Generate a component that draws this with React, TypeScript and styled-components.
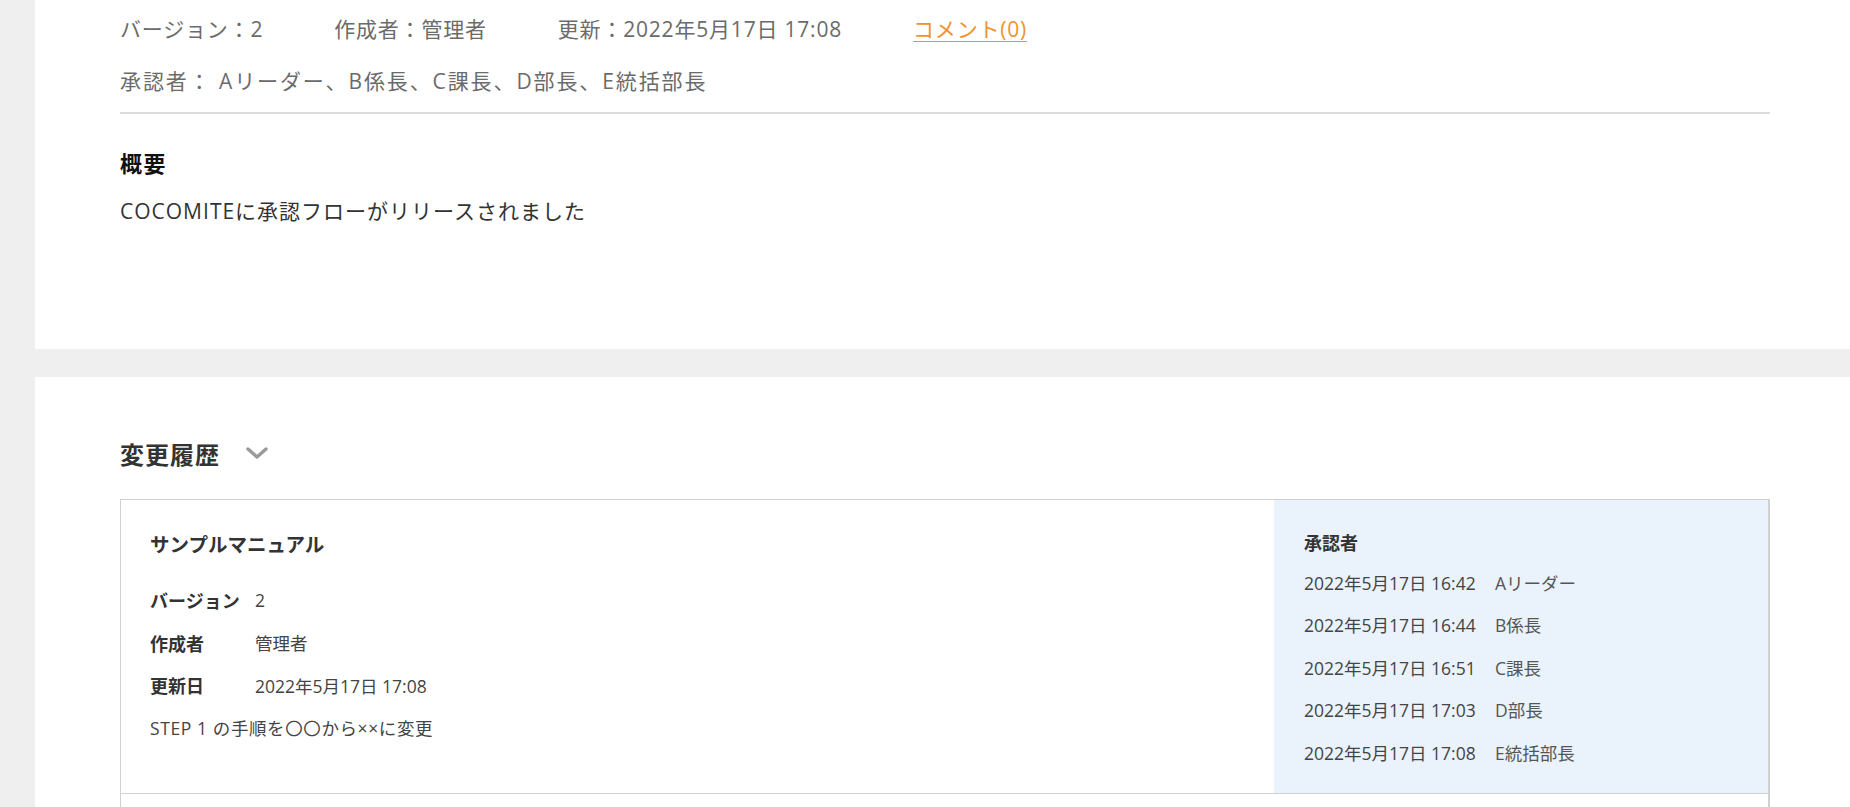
import React from "react";
import styled, { createGlobalStyle } from "styled-components";

const GlobalStyle = createGlobalStyle`
  html, body {
    margin: 0;
    padding: 0;
    background: #efefef;
    font-family: "Open Sans", "Noto Sans CJK JP", "Noto Sans", sans-serif;
    color: #333;
  }
  * { box-sizing: border-box; }
`;

const Page = styled.div`
  display: flex;
  flex-direction: column;
  gap: 28px;
  padding-left: 35px;
`;

const Card = styled.section<{ $top?: number; $bottom?: number }>`
  background: #fff;
  padding: ${(p) => p.$top ?? 0}px 80px ${(p) => p.$bottom ?? 0}px 85px;
`;

const MetaRow = styled.div`
  display: flex;
  align-items: center;
  gap: 71px;
  height: 32px;
  font-size: 21px;
  letter-spacing: 0.8px;
  color: #6b6b6b;
`;

const MetaItem = styled.span`
  flex: none;
  white-space: nowrap;
`;

const CommentLink = styled.a`
  color: #f0922e;
  text-decoration: underline;
  text-underline-offset: 4px;
  text-decoration-thickness: 1px;
  cursor: pointer;
`;

const ApproverLine = styled.div`
  margin-top: 20px;
  height: 32px;
  display: flex;
  align-items: center;
  font-size: 21px;
  letter-spacing: 1.9px;
  color: #6b6b6b;
  white-space: nowrap;
`;

const Divider = styled.hr`
  border: none;
  border-top: 2px solid #dcdcdc;
  margin: 16px 0 0;
`;

const SectionTitle = styled.h2`
  margin: 34px 0 0;
  font-size: 22px;
  font-weight: 700;
  letter-spacing: 1.5px;
  line-height: 30px;
  color: #111;
`;

const Summary = styled.p`
  margin: 18px 0 0;
  font-size: 21px;
  letter-spacing: 1px;
  line-height: 30px;
  color: #333;
`;

const HistoryHeader = styled.div`
  display: flex;
  align-items: center;
  gap: 25px;
  height: 30px;
`;

const HistoryTitle = styled.h2`
  margin: 0;
  font-size: 24px;
  font-weight: 700;
  letter-spacing: 1px;
  color: #333;
`;

const Chevron = styled.svg`
  width: 24px;
  height: 14px;
  color: #9a9a9a;
`;

const HistoryBox = styled.div`
  margin-top: 31px;
  border: 1px solid #d0d0d0;
  border-right-width: 2px;
`;

const Entry = styled.div`
  display: grid;
  grid-template-columns: 1fr 494px;
  border-bottom: 1px solid #d0d0d0;
`;

const EntryMain = styled.div`
  padding: 30px 30px 20px 29px;
`;

const EntryTitle = styled.h3`
  margin: 0;
  font-size: 19.5px;
  font-weight: 700;
  line-height: 30px;
  color: #333;
`;

const InfoList = styled.dl`
  margin: 19px 0 0;
  display: grid;
  grid-template-columns: 105px 1fr;
  grid-auto-rows: 42.5px;
  align-items: center;
`;

const InfoLabel = styled.dt`
  font-size: 18px;
  font-weight: 700;
  color: #333;
`;

const InfoValue = styled.dd`
  margin: 0;
  font-size: 17.5px;
  color: #444;
`;

const Note = styled.p`
  margin: 0;
  height: 42.5px;
  display: flex;
  align-items: center;
  font-size: 17.5px;
  letter-spacing: 0.6px;
  color: #444;
`;

const ApproverPanel = styled.div`
  background: #eaf3fb;
  padding: 28px 30px 19px 30px;
`;

const PanelTitle = styled.h4`
  margin: 0;
  font-size: 18px;
  font-weight: 700;
  line-height: 30px;
  color: #333;
`;

const ApprovalList = styled.ul`
  list-style: none;
  margin: 3px 0 0;
  padding: 0;
  display: grid;
  grid-auto-rows: 42.5px;
  align-items: center;
`;

const ApprovalRow = styled.li`
  display: grid;
  grid-template-columns: 191px 1fr;
  font-size: 17.5px;
  color: #444;
`;

const ApprovalName = styled.span`
  color: #555;
`;

const EntryStub = styled.div`
  height: 60px;
  background: #fff;
`;

const approvals = [
  { at: "2022年5月17日 16:42", who: "Aリーダー" },
  { at: "2022年5月17日 16:44", who: "B係長" },
  { at: "2022年5月17日 16:51", who: "C課長" },
  { at: "2022年5月17日 17:03", who: "D部長" },
  { at: "2022年5月17日 17:08", who: "E統括部長" },
];

export default function App() {
  return (
    <>
      <GlobalStyle />
      <Page>
        <Card $top={12} $bottom={123}>
          <MetaRow>
            <MetaItem>バージョン：2</MetaItem>
            <MetaItem>作成者：管理者</MetaItem>
            <MetaItem>更新：2022年5月17日 17:08</MetaItem>
            <MetaItem>
              <CommentLink>コメント(0)</CommentLink>
            </MetaItem>
          </MetaRow>
          <ApproverLine>承認者： Aリーダー、B係長、C課長、D部長、E統括部長</ApproverLine>
          <Divider />
          <SectionTitle>概要</SectionTitle>
          <Summary>COCOMITEに承認フローがリリースされました</Summary>
        </Card>
        <Card $top={61} $bottom={200}>
          <HistoryHeader>
            <HistoryTitle>変更履歴</HistoryTitle>
            <Chevron viewBox="0 0 24 14" fill="none">
              <polyline
                points="3,3 12,11 21,3"
                stroke="currentColor"
                strokeWidth="3.4"
                strokeLinecap="round"
                strokeLinejoin="round"
              />
            </Chevron>
          </HistoryHeader>
          <HistoryBox>
            <Entry>
              <EntryMain>
                <EntryTitle>サンプルマニュアル</EntryTitle>
                <InfoList>
                  <InfoLabel>バージョン</InfoLabel>
                  <InfoValue>2</InfoValue>
                  <InfoLabel>作成者</InfoLabel>
                  <InfoValue>管理者</InfoValue>
                  <InfoLabel>更新日</InfoLabel>
                  <InfoValue>2022年5月17日 17:08</InfoValue>
                </InfoList>
                <Note>STEP 1 の手順を〇〇から××に変更</Note>
              </EntryMain>
              <ApproverPanel>
                <PanelTitle>承認者</PanelTitle>
                <ApprovalList>
                  {approvals.map((a) => (
                    <ApprovalRow key={a.at}>
                      <span>{a.at}</span>
                      <ApprovalName>{a.who}</ApprovalName>
                    </ApprovalRow>
                  ))}
                </ApprovalList>
              </ApproverPanel>
            </Entry>
            <EntryStub />
          </HistoryBox>
        </Card>
      </Page>
    </>
  );
}
